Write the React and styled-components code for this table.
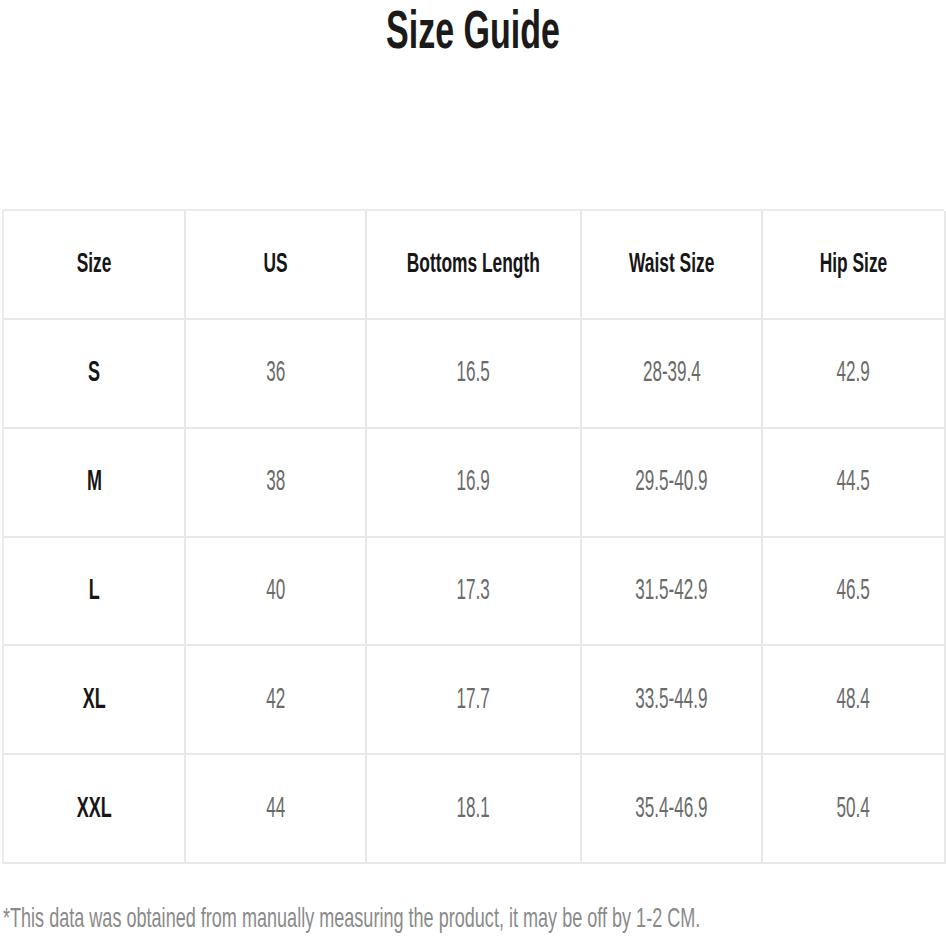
import styled, { createGlobalStyle } from "styled-components";

const Global = createGlobalStyle`
  html, body {
    margin: 0;
    padding: 0;
    background: #fff;
    font-family: "Liberation Sans", Arial, sans-serif;
  }
`;

const Page = styled.div`
  width: 946px;
  height: 943px;
  overflow: hidden;
  display: flex;
  flex-direction: column;
`;

const TitleBar = styled.div`
  height: 209px;
  display: flex;
  justify-content: center;
  align-items: flex-start;
`;

// text in the picture is squeezed sideways, so each label is scaled on x
const Squeeze = styled.span`
  display: inline-block;
  white-space: nowrap;
  transform: scaleX(${(p) => p.$x || 0.65});
  transform-origin: ${(p) => p.$origin || "center"};
`;

const Title = styled.h1`
  margin: 0;
  font-size: 54px;
  line-height: 58px;
  font-weight: 700;
  color: #1a1a1a;
`;

const Table = styled.div`
  margin-left: 2px;
  width: 942px;
  display: grid;
  grid-template-columns: 182px 181px 215px 181px 183px;
  grid-template-rows: 109px repeat(5, 108.8px);
  border-top: 2px solid #ebebeb;
  border-left: 2px solid #ebebeb;
  box-sizing: border-box;
`;

const Cell = styled.div`
  display: flex;
  align-items: center;
  justify-content: center;
  border-right: 2px solid #e8e8e8;
  border-bottom: 2px solid #e8e8e8;
  font-size: ${(p) => (p.$head ? "28px" : "30px")};
  font-weight: ${(p) => (p.$bold ? 700 : 400)};
  color: ${(p) => (p.$bold ? "#161616" : "#6a6a6a")};
  padding-bottom: 4px;
`;

const Note = styled.p`
  margin: 38px 0 0 3px;
  font-size: 28px;
  line-height: 32px;
  color: #8a8a8a;
`;

const headers = ["Size", "US", "Bottoms Length", "Waist Size", "Hip Size"];
const rows = [
  ["S", "36", "16.5", "28-39.4", "42.9"],
  ["M", "38", "16.9", "29.5-40.9", "44.5"],
  ["L", "40", "17.3", "31.5-42.9", "46.5"],
  ["XL", "42", "17.7", "33.5-44.9", "48.4"],
  ["XXL", "44", "18.1", "35.4-46.9", "50.4"],
];

export default function App() {
  return (
    <Page>
      <Global />
      <TitleBar>
        <Title>
          <Squeeze $x={0.63}>Size Guide</Squeeze>
        </Title>
      </TitleBar>
      <Table>
        {headers.map((h) => (
          <Cell key={h} $head $bold>
            <Squeeze $x={0.62}>{h}</Squeeze>
          </Cell>
        ))}
        {rows.map((r) =>
          r.map((v, i) => (
            <Cell key={r[0] + i} $bold={i === 0}>
              <Squeeze $x={i === 0 ? 0.6 : 0.57}>{v}</Squeeze>
            </Cell>
          ))
        )}
      </Table>
      <Note>
        <Squeeze $x={0.645} $origin="left">
          *This data was obtained from manually measuring the product, it may be off by 1-2 CM.
        </Squeeze>
      </Note>
    </Page>
  );
}
